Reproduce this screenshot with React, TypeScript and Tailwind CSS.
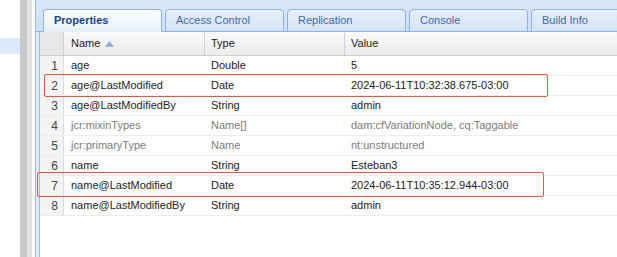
import React from 'react';

type Row = { n: number; name: string; type: string; value: string; sys?: boolean };

const rows: Row[] = [
  { n: 1, name: 'age', type: 'Double', value: '5' },
  { n: 2, name: 'age@LastModified', type: 'Date', value: '2024-06-11T10:32:38.675-03:00' },
  { n: 3, name: 'age@LastModifiedBy', type: 'String', value: 'admin' },
  { n: 4, name: 'jcr:mixinTypes', type: 'Name[]', value: 'dam:cfVariationNode, cq:Taggable', sys: true },
  { n: 5, name: 'jcr:primaryType', type: 'Name', value: 'nt:unstructured', sys: true },
  { n: 6, name: 'name', type: 'String', value: 'Esteban3' },
  { n: 7, name: 'name@LastModified', type: 'Date', value: '2024-06-11T10:35:12.944-03:00' },
  { n: 8, name: 'name@LastModifiedBy', type: 'String', value: 'admin' },
];

const tabs = ['Properties', 'Access Control', 'Replication', 'Console', 'Build Info'];

export default function App() {
  return (
    <div className="relative flex w-[617px] h-[257px] overflow-hidden bg-white font-['Liberation_Sans',Arial,sans-serif] text-[11px]">
      {/* left tree remnant */}
      <div className="w-[20px] shrink-0 bg-white pt-[38px]">
        <div className="h-[16px] bg-[#dce9f8]" />
      </div>
      {/* splitter */}
      <div className="w-[7px] shrink-0 bg-[#c9c9c9]" />
      <div className="w-[5px] shrink-0 bg-[#e2e2e2]" />
      <div className="w-[3px] shrink-0 bg-white" />

      {/* main panel */}
      <div className="flex-1 flex flex-col border-l border-[#99bbe8] min-w-0">
        {/* tab strip */}
        <div className="h-[32px] shrink-0 flex items-end gap-[3px] pl-[7px] bg-gradient-to-b from-[#dce8f7] to-[#cddff3] border-b border-[#8db2e3]">
          {tabs.map((t, i) => (
            <div
              key={t}
              className={`w-[119px] shrink-0 h-[23px] -mb-px rounded-t-[4px] border border-[#8db2e3] pl-[10px] flex items-center ${
                i === 0
                  ? 'bg-gradient-to-b from-[#ffffff] to-[#e6f0fb] border-b-[#e6f0fb] font-bold text-[#15428b]'
                  : 'bg-gradient-to-b from-[#e6effa] to-[#d4e4f6] text-[#416aa3]'
              }`}
            >
              {t}
            </div>
          ))}
        </div>

        {/* body */}
        <div className="flex-1 flex bg-[#dfe8f6] pl-[3px]">
          <div className="flex-1 bg-white border-l border-[#99bbe8] text-[#222]">
            {/* header */}
            <div className="flex h-[24px] border-b border-[#d0d0d0] bg-gradient-to-b from-[#f9f9f9] to-[#ececec]">
              <div className="w-[24px] shrink-0 bg-[#e8e8e8] border-r border-[#d0d0d0]" />
              <div className="w-[141px] shrink-0 flex items-center gap-[5px] pl-[7px] border-r border-[#d0d0d0]">
                Name
                <svg width="9" height="6" viewBox="0 0 9 6">
                  <path d="M0 6 L4.5 0 L9 6 Z" fill="#8fb0d9" />
                </svg>
              </div>
              <div className="w-[140px] shrink-0 flex items-center pl-[6px] border-r border-[#d0d0d0]">Type</div>
              <div className="flex-1 flex items-center pl-[6px]">Value</div>
            </div>
            {/* rows */}
            {rows.map((r) => (
              <div key={r.n} className={`flex h-[20px] border-b border-[#ededed] ${r.sys ? 'text-[#7a7a7a]' : 'text-[#222]'}`}>
                <div className="w-[24px] shrink-0 flex items-center justify-end pr-[5px] bg-[#f4f4f4] border-r border-[#dcdcdc] text-[12px] text-[#444]">
                  {r.n}
                </div>
                <div className="w-[141px] shrink-0 flex items-center pl-[7px] whitespace-nowrap">{r.name}</div>
                <div className="w-[140px] shrink-0 flex items-center pl-[6px]">{r.type}</div>
                <div className="flex-1 flex items-center pl-[6px] whitespace-nowrap">{r.value}</div>
              </div>
            ))}
          </div>
        </div>
      </div>

      {/* highlight boxes */}
      <div className="absolute left-[44px] top-[74px] w-[504px] h-[23px] border-[1.5px] border-[#e2583e] rounded-[2px]" />
      <div className="absolute left-[37px] top-[172px] w-[507px] h-[25px] border-[1.5px] border-[#e2583e] rounded-[2px]" />
    </div>
  );
}
